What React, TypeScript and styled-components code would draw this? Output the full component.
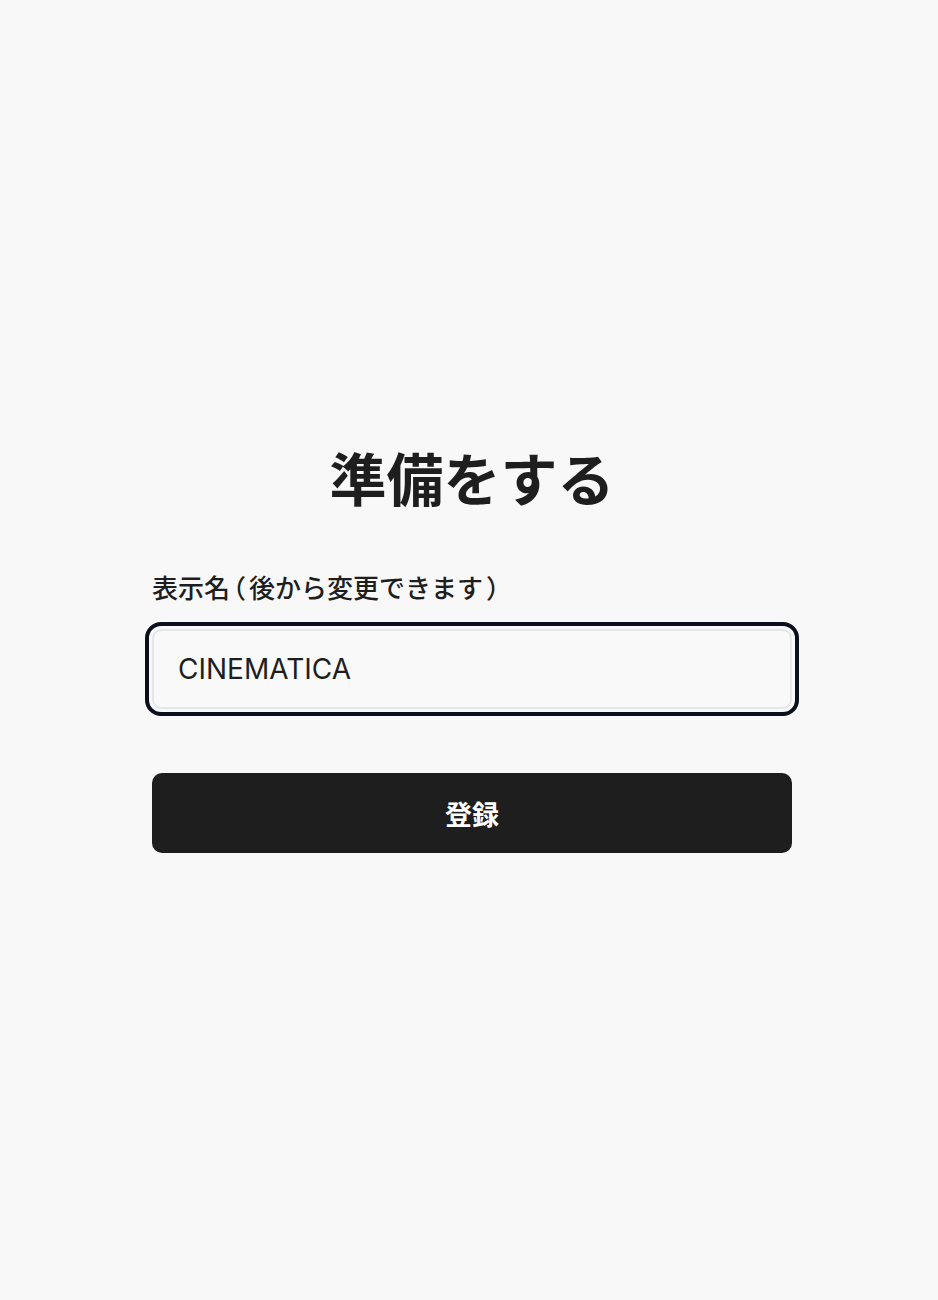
import React, { useState } from 'react';
import styled, { createGlobalStyle } from 'styled-components';

const GlobalStyle = createGlobalStyle`
  * {
    box-sizing: border-box;
  }

  body {
    margin: 0;
    background: #f8f8f8;
    color: #1e1e1e;
    font-family: Inter, "Noto Sans CJK JP", sans-serif;
  }
`

const Page = styled.div`
  min-height: 100vh;
  display: flex;
  align-items: center;
  justify-content: center;
  padding-left: 6px;
`

const Form = styled.form`
  width: 640px;
  display: flex;
  flex-direction: column;
`

const Title = styled.h1`
  margin: 0 0 56px;
  font-size: 57px;
  line-height: 1.2;
  font-weight: 700;
  text-align: center;
`

const Label = styled.label`
  font-size: 26px;
  line-height: 36px;
  font-weight: 500;
  margin-bottom: 22px;
`

const Paren = styled.span`
  font-feature-settings: "halt";
  margin: 0 3px;
`

const NameInput = styled.input`
  height: 80px;
  width: 100%;
  padding: 0 24px;
  border: 2px solid #e3e6ec;
  border-radius: 9px;
  background: #f9f9fa;
  color: #1e1e1e;
  font-family: Inter, "Noto Sans CJK JP", sans-serif;
  font-size: 28px;
  caret-color: #111;

  &:focus {
    outline: 4px solid #0a0f1e;
    outline-offset: 3px;
  }
`

const SubmitButton = styled.button`
  margin-top: 64px;
  height: 80px;
  width: 100%;
  border: none;
  border-radius: 10px;
  background: #1e1e1e;
  color: #ffffff;
  font-family: Inter, "Noto Sans CJK JP", sans-serif;
  font-size: 27px;
  font-weight: 700;
  cursor: pointer;
`

export default function App() {
  const [name, setName] = useState('CINEMATICA');

  return (
    <Page>
      <GlobalStyle />
      <Form onSubmit={(e) => e.preventDefault()}>
        <Title>準備をする</Title>
        <Label htmlFor='display-name'>
          表示名<Paren>（</Paren>後から変更できます<Paren>）</Paren>
        </Label>
        <NameInput
          id='display-name'
          value={name}
          autoFocus
          onChange={(e) => setName(e.target.value)}
        />
        <SubmitButton type='submit'>登録</SubmitButton>
      </Form>
    </Page>
  );
}
